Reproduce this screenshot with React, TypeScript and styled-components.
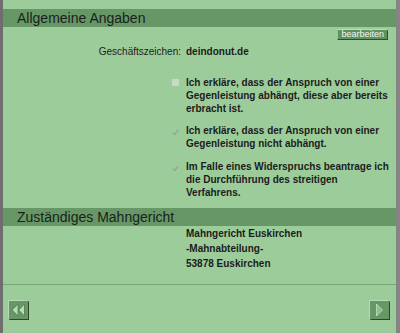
import React from "react";
import styled, { createGlobalStyle } from "styled-components";

const GlobalStyle = createGlobalStyle`
  html, body {
    margin: 0;
    padding: 0;
    background: #9ccc9a;
  }
`;

const Frame = styled.div`
  box-sizing: border-box;
  width: 400px;
  height: 333px;
  background: #9ccc9a;
  border-left: 3px solid #6e6e6e;
  border-right: 4px solid #858585;
  padding-top: 9px;
  display: flex;
  flex-direction: column;
  font-family: "Liberation Sans", Arial, sans-serif;
  color: #1c1c1c;
`;

const SectionHeader = styled.div<{ $gap?: number }>`
  height: 18px;
  line-height: 18px;
  margin-top: ${(p) => p.$gap ?? 0}px;
  background: #679767;
  padding-left: 14px;
  font-size: 14px;
  color: #1a1f1a;
`;

const Toolbar = styled.div`
  display: flex;
  justify-content: flex-end;
  padding: 2px 8px 0 0;
  height: 13px;
`;

const EditButton = styled.button`
  height: 11px;
  padding: 0 3px;
  border: none;
  border-top: 1px solid #b9dcb9;
  border-left: 1px solid #b9dcb9;
  border-bottom: 1px solid #2f4f2f;
  border-right: 1px solid #2f4f2f;
  background: #5f905f;
  color: #f2f7f2;
  font-family: "Liberation Sans", Arial, sans-serif;
  font-size: 9px;
  line-height: 9px;
  clip-path: polygon(0 0, calc(100% - 2px) 0, 100% 2px, 100% 100%, 0 100%);
`;

const FieldGrid = styled.div`
  display: grid;
  grid-template-columns: 178px 1fr;
  column-gap: 5px;
  font-size: 10px;
`;

const Label = styled.div<{ $top?: number }>`
  text-align: right;
  line-height: 13px;
  margin-top: ${(p) => p.$top ?? 0}px;
`;

const Value = styled.div<{ $top?: number; $lh?: number }>`
  font-weight: bold;
  line-height: ${(p) => p.$lh ?? 13}px;
  margin-top: ${(p) => p.$top ?? 0}px;
`;

const BoxCell = styled.div<{ $top?: number }>`
  display: flex;
  justify-content: flex-end;
  padding-right: 2px;
  padding-top: 3px;
  margin-top: ${(p) => p.$top ?? 0}px;
`;

const Box = styled.span<{ $checked?: boolean }>`
  display: block;
  width: 7px;
  height: 7px;
  background: ${(p) => (p.$checked ? "transparent" : "#c3dcc2")};
`;

const Spacer = styled.div`
  flex: 1;
`;

const Rule = styled.div`
  height: 1px;
  background: #78a878;
  margin-top: 12px;
`;

const NavBar = styled.div`
  display: flex;
  justify-content: space-between;
  padding: 15px 6px 13px 5px;
`;

const NavButton = styled.button`
  width: 21px;
  height: 20px;
  padding: 0;
  border: none;
  border-top: 1px solid #b6d9b6;
  border-left: 1px solid #b6d9b6;
  border-bottom: 1px solid #2c472c;
  border-right: 1px solid #2c472c;
  background: #679767;
  display: flex;
  align-items: center;
  justify-content: center;
  clip-path: polygon(0 0, calc(100% - 2px) 0, 100% 2px, 100% 100%, 2px 100%, 0 calc(100% - 2px));
`;

const Check = () => (
  <svg width="7" height="7" viewBox="0 0 7 7">
    <path d="M0.8 3.6 L2.7 5.6 L6.2 1" stroke="#93a893" strokeWidth="1.4" fill="none" />
  </svg>
);

const App: React.FC = () => {
  return (
    <>
      <GlobalStyle />
      <Frame>
        <SectionHeader>Allgemeine Angaben</SectionHeader>
        <Toolbar>
          <EditButton>bearbeiten</EditButton>
        </Toolbar>
        <FieldGrid>
          <Label $top={3}>Geschäftszeichen:</Label>
          <Value $top={3}>deindonut.de</Value>

          <BoxCell $top={18}>
            <Box />
          </BoxCell>
          <Value $top={18}>
            Ich erkläre, dass der Anspruch von einer
            <br />
            Gegenleistung abhängt, diese aber bereits
            <br />
            erbracht ist.
          </Value>

          <BoxCell $top={9}>
            <Box $checked>
              <Check />
            </Box>
          </BoxCell>
          <Value $top={9}>
            Ich erkläre, dass der Anspruch von einer
            <br />
            Gegenleistung nicht abhängt.
          </Value>

          <BoxCell $top={10}>
            <Box $checked>
              <Check />
            </Box>
          </BoxCell>
          <Value $top={10}>
            Im Falle eines Widerspruchs beantrage ich
            <br />
            die Durchführung des streitigen
            <br />
            Verfahrens.
          </Value>
        </FieldGrid>
        <SectionHeader $gap={9}>Zuständiges Mahngericht</SectionHeader>
        <FieldGrid>
          <div />
          <Value $lh={15}>
            Mahngericht Euskirchen
            <br />
            -Mahnabteilung-
            <br />
            53878 Euskirchen
          </Value>
        </FieldGrid>
        <Spacer />
        <Rule />
        <NavBar>
          <NavButton aria-label="zurück">
            <svg width="15" height="14" viewBox="0 0 15 14">
              <path d="M7 1 L1.2 7 L7 13 Z" fill="#b8dbb8" stroke="#4f7d4f" strokeWidth="0.8" />
              <path d="M13.5 1 L7.7 7 L13.5 13 Z" fill="#b8dbb8" stroke="#4f7d4f" strokeWidth="0.8" />
            </svg>
          </NavButton>
          <NavButton aria-label="weiter">
            <svg width="9" height="14" viewBox="0 0 9 14">
              <path d="M1.5 1 L7.5 7 L1.5 13 Z" fill="#8fbf8f" stroke="#c3e1c3" strokeWidth="0.8" />
            </svg>
          </NavButton>
        </NavBar>
      </Frame>
    </>
  );
};

export default App;
